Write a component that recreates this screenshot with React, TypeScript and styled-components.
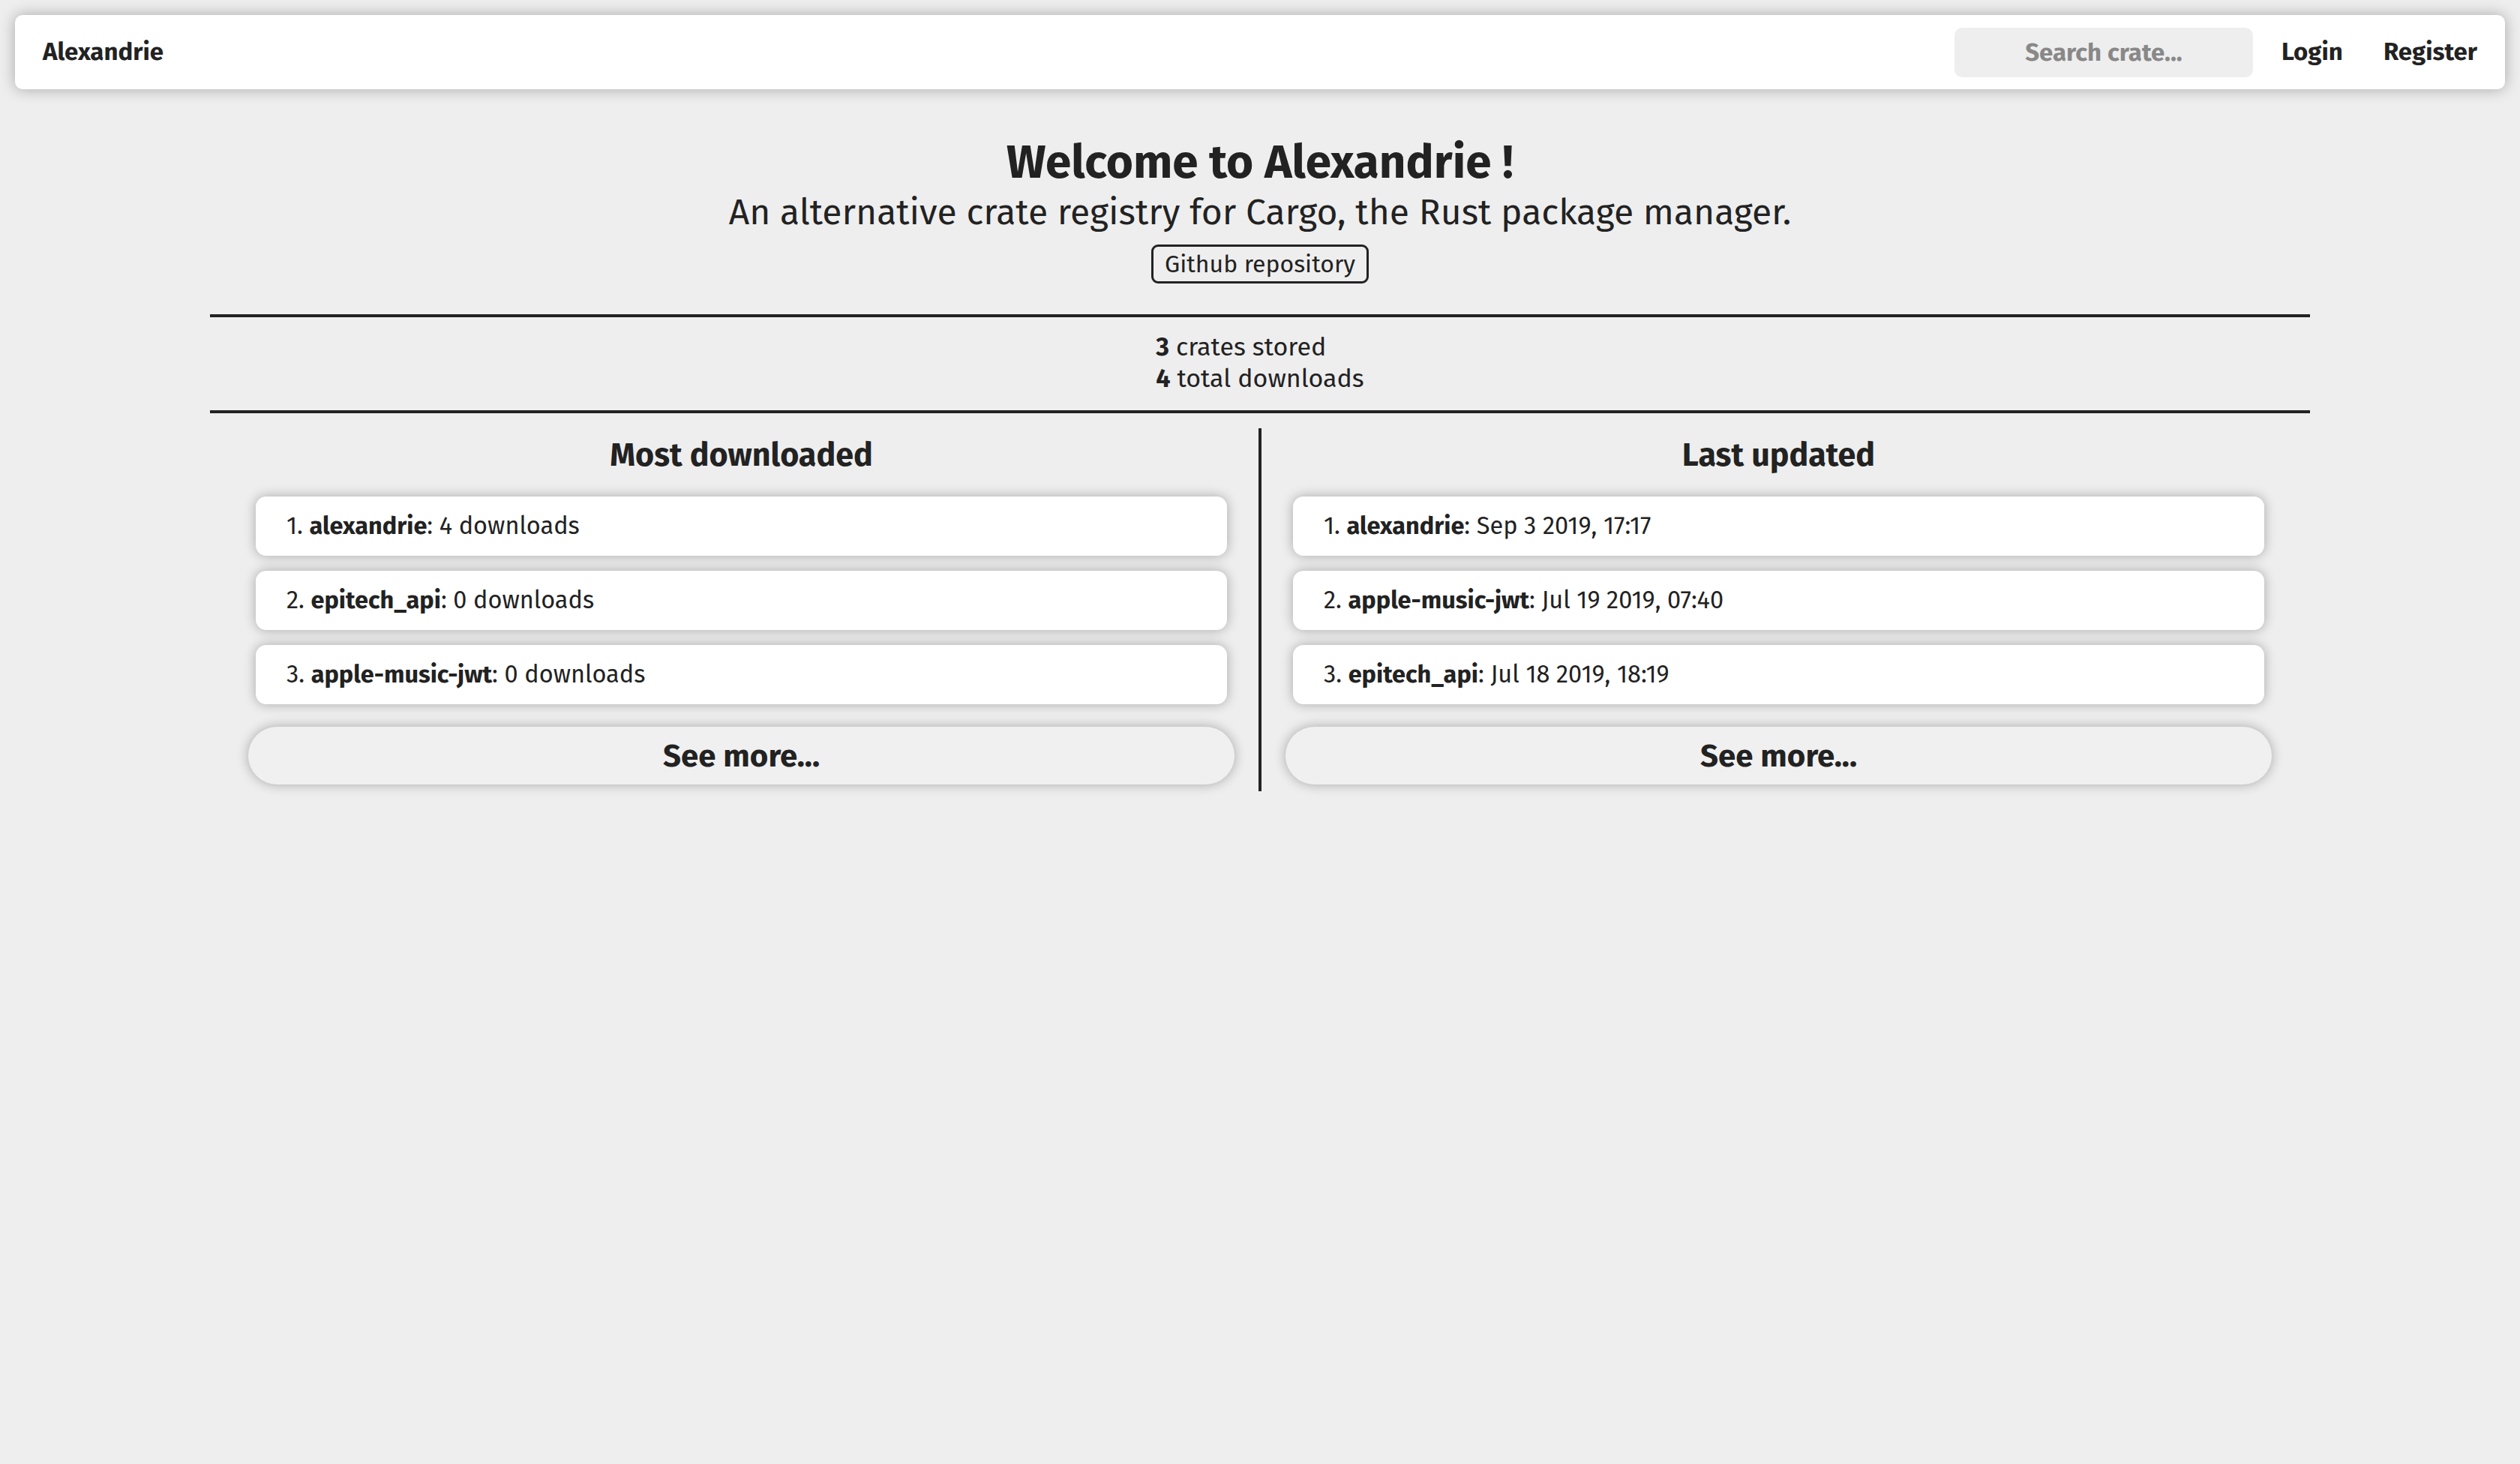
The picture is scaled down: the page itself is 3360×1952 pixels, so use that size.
import React from "react";
import styled, { createGlobalStyle } from "styled-components";

const GlobalStyle = createGlobalStyle`
  * {
    box-sizing: border-box;
  }

  html,
  body {
    margin: 0;
    padding: 0;
  }

  body {
    background: #eeeeee;
    color: #222222;
    font-family: "Fira Sans", "Roboto", "Noto Sans", sans-serif;
    font-size: 32px;
    line-height: 1.3;
  }
`;

const Page = styled.div`
  min-height: 1952px;
  padding: 20px;
`;

const Navbar = styled.nav`
  display: flex;
  align-items: center;
  height: 99px;
  padding: 0 37px;
  background: #ffffff;
  border-radius: 10px;
  box-shadow: 0 0 20px rgba(0, 0, 0, 0.3);
`;

const Brand = styled.a`
  flex: 1;
  font-size: 33px;
  font-weight: 700;
  color: #222222;
  text-decoration: none;
`;

const SearchInput = styled.input`
  width: 398px;
  height: 66px;
  margin-right: 38px;
  border: none;
  border-radius: 10px;
  background: #eeeeee;
  text-align: center;
  font-family: inherit;
  font-size: 33px;
  font-weight: 700;
  color: #222222;
  outline: none;

  &::placeholder {
    color: #888888;
  }
`;

const NavLink = styled.a<{ $gap?: number }>`
  margin-right: ${({ $gap }) => $gap ?? 0}px;
  font-size: 33px;
  font-weight: 700;
  color: #222222;
  text-decoration: none;
`;

const Main = styled.main`
  width: 2800px;
  margin: 0 auto;
`;

const Hero = styled.header`
  margin-top: 58px;
  text-align: center;
`;

const Title = styled.h1`
  margin: 0;
  font-size: 62px;
  font-weight: 700;
  line-height: 78px;
`;

const Subtitle = styled.p`
  margin: 0;
  font-size: 48px;
  line-height: 1.2;
`;

const RepoLink = styled.a`
  display: inline-block;
  margin-top: 13px;
  padding: 4px 15px;
  border: 3px solid #222222;
  border-radius: 9px;
  font-size: 32px;
  line-height: 38px;
  color: #222222;
  text-decoration: none;
`;

const Rule = styled.hr`
  margin: 0;
  border: none;
  border-top: 4px solid #222222;
`;

const TopRule = styled(Rule)`
  margin-top: 41px;
`;

const Stats = styled.section`
  display: flex;
  justify-content: center;
  padding: 19px 0 21px;
`;

const StatLines = styled.div`
  text-align: left;
  font-size: 34px;
  line-height: 42px;
`;

const Columns = styled.div`
  display: grid;
  grid-template-columns: 1fr 4px 1fr;
  margin: 20px 19px 0;
`;

const Divider = styled.div`
  background: #222222;
`;

const Column = styled.section`
  display: flex;
  flex-direction: column;
  gap: 20px;
  padding: 10px 42px 9px;
`;

const ColumnTitle = styled.h2`
  margin: 0 0 10px;
  font-size: 43px;
  font-weight: 700;
  line-height: 1.2;
  text-align: center;
`;

const Card = styled.div`
  padding: 18px 41px;
  background: #ffffff;
  border-radius: 14px;
  box-shadow: 0 0 16px rgba(0, 0, 0, 0.3);
  font-size: 32.5px;
  line-height: 43px;
`;

const SeeMore = styled.button`
  height: 77px;
  margin: 10px -10px 0;
  border: none;
  border-radius: 999px;
  background: #f0f0f0;
  box-shadow: 0 0 16px rgba(0, 0, 0, 0.3);
  font-family: inherit;
  font-size: 42px;
  font-weight: 700;
  color: #222222;
  cursor: pointer;
`;

type Entry = { name: string; info: string };

const mostDownloaded: Entry[] = [
  { name: "alexandrie", info: "4 downloads" },
  { name: "epitech_api", info: "0 downloads" },
  { name: "apple-music-jwt", info: "0 downloads" },
];

const lastUpdated: Entry[] = [
  { name: "alexandrie", info: "Sep 3 2019, 17:17" },
  { name: "apple-music-jwt", info: "Jul 19 2019, 07:40" },
  { name: "epitech_api", info: "Jul 18 2019, 18:19" },
];

function CrateList({ title, entries }: { title: string; entries: Entry[] }) {
  return (
    <Column>
      <ColumnTitle>{title}</ColumnTitle>
      {entries.map((entry, i) => (
        <Card key={entry.name}>
          {i + 1}. <b>{entry.name}</b>: {entry.info}
        </Card>
      ))}
      <SeeMore>See more...</SeeMore>
    </Column>
  );
}

export default function App() {
  return (
    <>
      <GlobalStyle />
      <Page>
        <Navbar>
          <Brand href="#">Alexandrie</Brand>
          <SearchInput placeholder="Search crate..." />
          <NavLink href="#" $gap={54}>
            Login
          </NavLink>
          <NavLink href="#">Register</NavLink>
        </Navbar>
        <Main>
          <Hero>
            <Title>Welcome to Alexandrie !</Title>
            <Subtitle>An alternative crate registry for Cargo, the Rust package manager.</Subtitle>
            <RepoLink href="#">Github repository</RepoLink>
          </Hero>
          <TopRule />
          <Stats>
            <StatLines>
              <div>
                <b>3</b> crates stored
              </div>
              <div>
                <b>4</b> total downloads
              </div>
            </StatLines>
          </Stats>
          <Rule />
          <Columns>
            <CrateList title="Most downloaded" entries={mostDownloaded} />
            <Divider />
            <CrateList title="Last updated" entries={lastUpdated} />
          </Columns>
        </Main>
      </Page>
    </>
  );
}
